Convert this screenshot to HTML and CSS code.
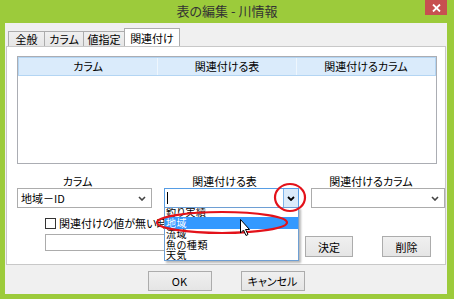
FILE: index.html
```html
<!DOCTYPE html>
<html lang="ja">
<head>
<meta charset="utf-8">
<title>表の編集 - 川情報</title>
<link rel="stylesheet" href="styles.css">
</head>
<body>
<div class="window">
  <div class="titlebar">
    <span></span>
    <div class="title">表の編集 - 川情報</div>
    <div class="close">
      <svg width="9" height="8" viewBox="0 0 9 8"><path d="M1 0.5 L8 7.5 M8 0.5 L1 7.5" stroke="#fff" stroke-width="1.8"/></svg>
    </div>
  </div>
  <div class="client">
    <div class="tabs">
      <div class="tab t1">全般</div>
      <div class="tab t2">カラム</div>
      <div class="tab t3">値指定</div>
      <div class="tab t4 active">関連付け</div>
    </div>
    <div class="panel">
      <div class="listview">
        <div class="lv-header">
          <div class="lv-col">カラム</div>
          <div class="lv-col">関連付ける表</div>
          <div class="lv-col last">関連付けるカラム</div>
        </div>
      </div>
      <div class="fields">
        <div class="field">
          <div class="field-label">カラム</div>
          <div class="combo">
            <span class="combo-text">地域－ID</span>
            <svg class="chev" width="8" height="5" viewBox="0 0 8 5"><path d="M1 1 L4 4 L7 1" fill="none" stroke="#444" stroke-width="1.6"/></svg>
          </div>
        </div>
        <div class="field">
          <div class="field-label">関連付ける表</div>
          <div class="combo focused">
            <span class="caret"></span>
            <span class="combo-btn">
              <svg width="8" height="5" viewBox="0 0 8 5"><path d="M1 1 L4 4 L7 1" fill="none" stroke="#000" stroke-width="1.8"/></svg>
            </span>
            <div class="dropdown">
              <div class="dd-inner">
                <div class="dd-item first">釣り実績</div>
                <div class="dd-item sel">地域</div>
                <div class="dd-item">流域</div>
                <div class="dd-item">魚の種類</div>
                <div class="dd-item">天気</div>
              </div>
            </div>
          </div>
        </div>
        <div class="field">
          <div class="field-label">関連付けるカラム</div>
          <div class="combo">
            <span class="combo-text"></span>
            <svg class="chev" width="8" height="5" viewBox="0 0 8 5"><path d="M1 1 L4 4 L7 1" fill="none" stroke="#444" stroke-width="1.6"/></svg>
          </div>
        </div>
      </div>
      <div class="check-row">
        <span class="checkbox"></span>
        <span class="check-label">関連付けの値が無い時は追加する</span>
      </div>
      <div class="input-row">
        <div class="textbox"></div>
        <div class="btn decide">決定</div>
        <div class="btn delete">削除</div>
      </div>
    </div>
    <div class="footer">
      <div class="btn wide">OK</div>
      <div class="btn wide">キャンセル</div>
    </div>
  </div>
  <svg class="annot" width="454" height="299" viewBox="0 0 454 299">
    <ellipse cx="222" cy="222.5" rx="65" ry="10.5" fill="none" stroke="#e3121a" stroke-width="2.2"/>
    <ellipse cx="290" cy="197.5" rx="15" ry="13.5" fill="none" stroke="#e3121a" stroke-width="2.2"/>
    <path d="M240.5 219.5 L240.5 233 L243.5 230 L246 235.5 L248 234.5 L245.5 229.5 L249.5 229.5 Z" fill="#fff" stroke="#000" stroke-width="1" stroke-linejoin="round"/>
  </svg>
</div>
</body>
</html>
```
FILE: styles.css
```css
* { box-sizing: border-box; }
body { margin: 0; }
.window {
  width: 454px;
  height: 299px;
  background: #9ccb3b;
  display: flex;
  flex-direction: column;
  position: relative;
  overflow: hidden;
  font-family: "Noto Sans CJK JP", "Noto Sans", sans-serif;
  font-size: 11px;
  font-feature-settings: "palt";
  color: #000;
}
.titlebar {
  height: 23px;
  flex: none;
  display: grid;
  grid-template-columns: 1fr auto 1fr;
}
.title {
  font-size: 13px;
  line-height: 22px;
  color: #333;
  white-space: nowrap;
}
.close {
  justify-self: end;
  align-self: start;
  margin-right: 7px;
  width: 22px;
  height: 15px;
  background: #c75050;
  display: flex;
  align-items: center;
  justify-content: center;
}
.client {
  flex: 1;
  margin: 0 7px 5px 5px;
  background: #f0f0f0;
  display: flex;
  flex-direction: column;
}
.tabs {
  height: 23px;
  flex: none;
  display: flex;
  align-items: flex-end;
  padding-left: 3px;
}
.tab {
  height: 15px;
  line-height: 14px;
  text-align: center;
  background: linear-gradient(#f0f0f0, #e6e6e6);
  border: 1px solid #acacac;
  border-bottom: none;
  margin-right: -1px;
  white-space: nowrap;
}
.t1 { width: 37px; }
.t2 { width: 40px; }
.t3 { width: 42px; }
.t4 { width: 56px; }
.tab.active {
  height: 19px;
  line-height: 18px;
  background: #fff;
  margin-bottom: -1px;
}
.panel {
  height: 219px;
  flex: none;
  margin: 0 1px;
  background: #fff;
  border: 1px solid #c8c8c8;
}
.listview {
  margin: 9px 8px 0 10px;
  height: 108px;
  border: 1px solid #abadb3;
  background: #fff;
}
.lv-header {
  display: grid;
  grid-template-columns: 139px 139px 1fr;
  height: 19px;
  background: #daebfb;
  border: 1px solid #b3d5f3;
}
.lv-col {
  text-align: center;
  line-height: 17px;
  border-right: 1px solid #eef6fd;
  white-space: nowrap;
}
.lv-col.last { border-right: none; }
.fields {
  display: grid;
  grid-template-columns: 135px 135px 134px;
  column-gap: 12px;
  margin: 10px 0 0 10px;
}
.field-label {
  height: 14px;
  line-height: 14px;
  text-align: center;
  padding-right: 14px;
  white-space: nowrap;
}
.combo {
  height: 20px;
  border: 1px solid #acacac;
  background: #fff;
  display: flex;
  align-items: center;
  position: relative;
}
.combo-text {
  flex: 1;
  padding-left: 3px;
  line-height: 18px;
  white-space: nowrap;
}
.chev { margin-right: 5px; }
.combo.focused { border-color: #569de5; }
.caret {
  width: 1px;
  height: 12px;
  background: #000;
  margin-left: 2px;
  flex: none;
}
.combo-btn {
  margin-left: auto;
  width: 15px;
  height: 18px;
  background: #dbebfa;
  border-left: 1px solid #7eb4ea;
  display: flex;
  align-items: center;
  justify-content: center;
}
.dropdown {
  position: absolute;
  left: -1px;
  top: 18px;
  width: 135px;
  height: 54px;
  background: #fff;
  border: 1px solid #6e9fd4;
  box-shadow: 2px 2px 2px rgba(0, 0, 0, 0.28);
  overflow: hidden;
  z-index: 5;
}
.dd-inner { margin-top: -1px; }
.dd-item {
  height: 10.5px;
  line-height: 10.5px;
  font-size: 10px;
  letter-spacing: 0.6px;
  padding-left: 1px;
  white-space: nowrap;
}
.dd-item.first { height: 10px; line-height: 10px; }
.dd-item.sel {
  height: 12px;
  line-height: 12px;
  background: #3399ff;
  color: #fff;
}
.check-row {
  margin: 9px 0 0 38px;
  height: 12px;
  display: flex;
  align-items: center;
  gap: 3px;
}
.checkbox {
  width: 11px;
  height: 11px;
  border: 1px solid #333;
  background: #fff;
  flex: none;
}
.check-label {
  line-height: 12px;
  white-space: nowrap;
}
.input-row {
  margin: 5px 0 0 38px;
  display: flex;
  align-items: flex-start;
}
.textbox {
  width: 240px;
  height: 17px;
  border: 1px solid #acacac;
  background: #fff;
}
.btn {
  height: 21px;
  border: 1px solid #acacac;
  background: linear-gradient(#f0f0f0, #e5e5e5);
  display: flex;
  align-items: center;
  justify-content: center;
  white-space: nowrap;
}
.decide { width: 48px; margin: 2px 0 0 20px; }
.delete { width: 49px; margin: 2px 0 0 29px; }
.footer {
  flex: 1;
  display: flex;
  justify-content: center;
  gap: 29px;
  padding-top: 6px;
}
.btn.wide { width: 64px; height: 20px; }
.annot {
  position: absolute;
  left: 0;
  top: 0;
  pointer-events: none;
  z-index: 10;
}
```
